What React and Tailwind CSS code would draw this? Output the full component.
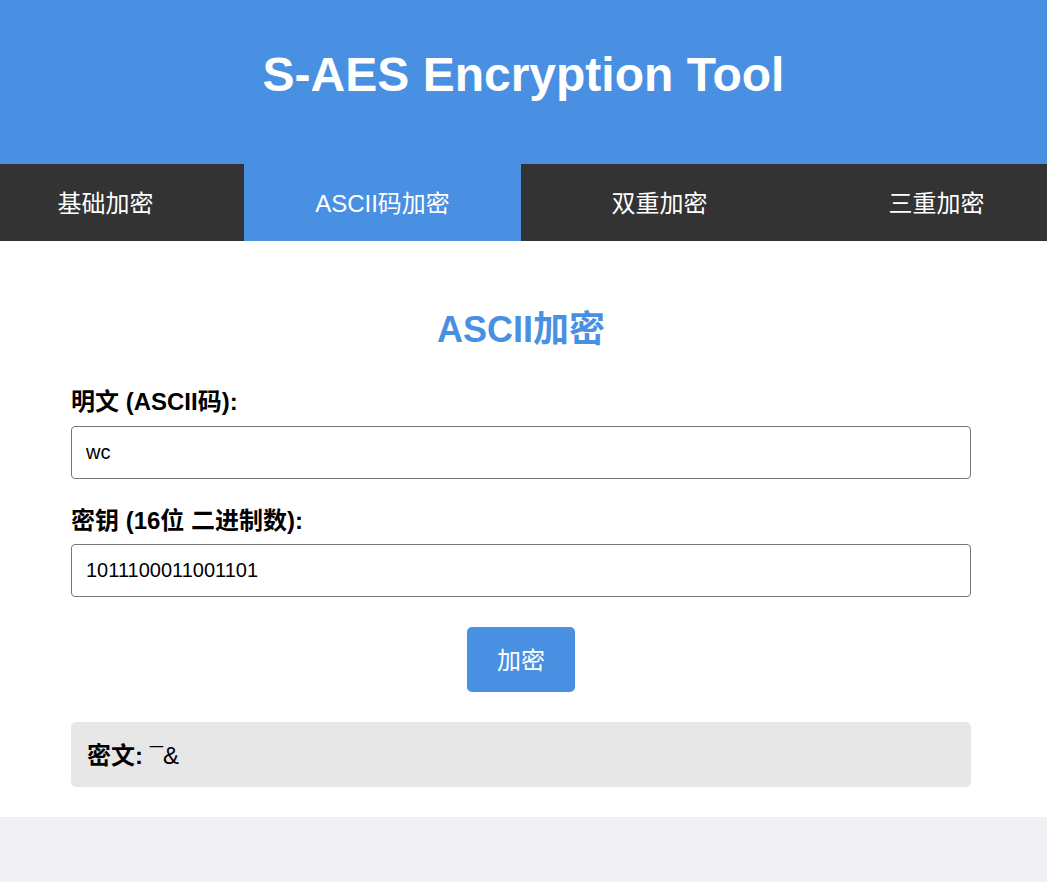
import React, { useState } from "react";

const font = { fontFamily: '"Liberation Sans", Arial, "Noto Sans CJK SC", sans-serif' };

const tabs = ["基础加密", "ASCII码加密", "双重加密", "三重加密"];

function App() {
  const [active, setActive] = useState(1);
  const [plain, setPlain] = useState("wc");
  const [key, setKey] = useState("1011100011001101");

  return (
    <div className="min-h-[882px] bg-[#f0f0f5]" style={font}>
      {/* 헤더 */}
      <header className="h-[164px] bg-[#4a90e2] pt-[47px]">
        <h1 className="text-center text-[48px] font-bold leading-[55px] text-white">S-AES Encryption Tool</h1>
      </header>

      {/* 탭 메뉴 */}
      <nav className="flex h-[77px] overflow-hidden bg-[#333333]">
        <div className="ml-[-33px] flex shrink-0">
          {tabs.map((t, i) => (
            <button
              key={t}
              onClick={() => setActive(i)}
              className={
                "flex h-[77px] w-[277px] shrink-0 items-center justify-center pt-[3px] text-[24px] text-white " +
                (i === active ? "bg-[#4a90e2]" : "bg-[#333333]")
              }
            >
              {t}
            </button>
          ))}
        </div>
      </nav>

      {/* 본문 */}
      <main className="bg-white pl-[71px] pr-[76px] pt-[68px] pb-[30px]">
        <h2 className="text-center text-[36px] font-bold leading-[41px] text-[#4a90e2]">ASCII加密</h2>

        <label className="mt-[38px] block text-[24px] font-bold leading-[28px] text-black">明文 (ASCII码):</label>
        <input
          className="mt-[10px] block h-[53px] w-full rounded-[4px] border border-[#767676] px-[14px] text-[20px] text-black outline-none"
          value={plain}
          onChange={(e) => setPlain(e.target.value)}
        />

        <label className="mt-[28px] block text-[24px] font-bold leading-[28px] text-black">密钥 (16位 二进制数):</label>
        <input
          className="mt-[9px] block h-[53px] w-full rounded-[4px] border border-[#767676] px-[14px] text-[20px] text-black outline-none"
          value={key}
          onChange={(e) => setKey(e.target.value)}
        />

        <div className="mt-[30px] flex justify-center">
          <button className="h-[65px] w-[108px] rounded-[5px] bg-[#4a90e2] pt-[3px] text-[24px] text-white">加密</button>
        </div>

        <div className="mt-[30px] flex h-[65px] items-center rounded-[5px] bg-[#e7e7e7] px-[16px] pt-[2px] text-[24px] text-black">
          <strong>密文:</strong>
          <span className="whitespace-pre"> ¯&amp;</span>
        </div>
      </main>
    </div>
  );
}

export default App;
